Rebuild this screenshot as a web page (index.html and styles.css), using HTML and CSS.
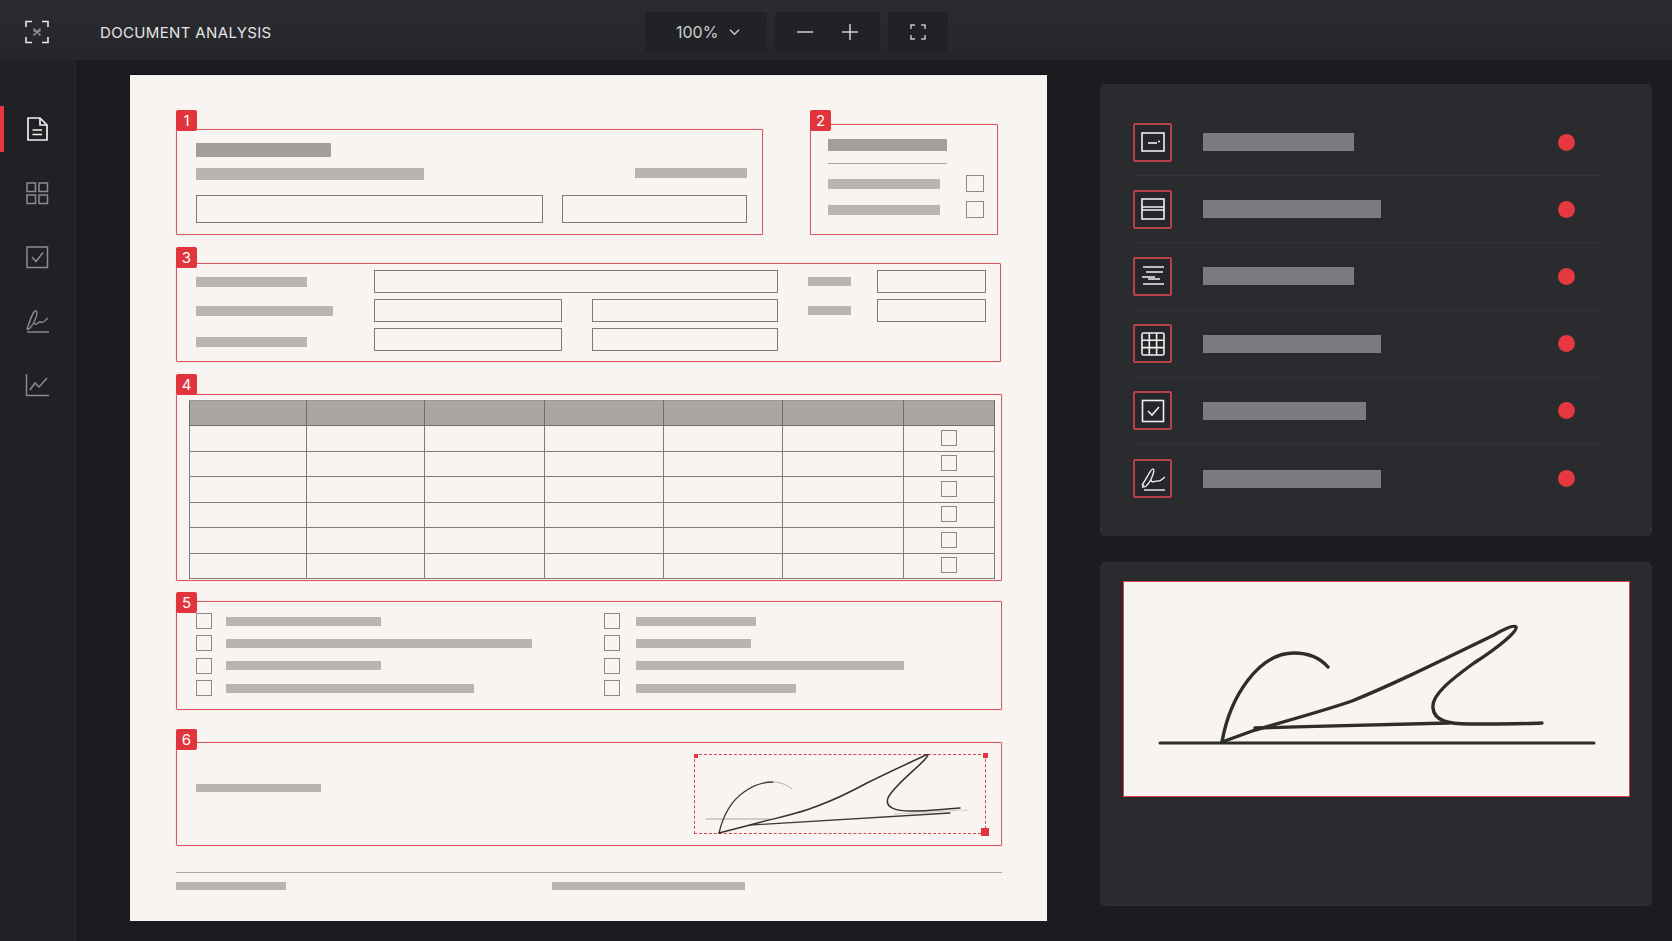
FILE: index.html
```html
<!DOCTYPE html>
<html lang="en">
<head>
  <meta charset="UTF-8">
  <meta name="viewport" content="width=device-width, initial-scale=1.0">
  <title>Document Analysis</title>
  <link rel="stylesheet" href="styles.css">
</head>
<body>
<!-- Top bar -->
<header class="topbar">
  <svg class="logo" viewBox="0 0 24 24" fill="none" stroke="#e6e6e6" stroke-width="1.600">
    <path d="M1 7V1.500H7M17 1.500H23V7M23 17V22.500H17M7 22.500H1V17"/>
    <path d="M8.500 8.500L15.500 15.500M15.500 8.500L8.500 15.500M8.500 11H15.500" stroke="#8d8e91" stroke-width="1.600"/>
  </svg>
  <div class="app-title">DOCUMENT ANALYSIS</div>
  <div class="controls">
    <div class="ctl ctl-zoom">
      <span>100%</span>
      <svg class="chev" viewBox="0 0 12 8" fill="none" stroke="#c8c8c9" stroke-width="1.500"><path d="M1 1.500L6 6.500L11 1.500"/></svg>
    </div>
    <div class="ctl ctl-steps">
      <svg class="step" viewBox="0 0 16 16" fill="none" stroke="#d0d0d1" stroke-width="1.500"><path d="M0 8H16"/></svg>
      <svg class="step" viewBox="0 0 16 16" fill="none" stroke="#d0d0d1" stroke-width="1.500"><path d="M0 8H16M8 0V16"/></svg>
    </div>
    <div class="ctl ctl-fit">
      <svg class="step" viewBox="0 0 16 16" fill="none" stroke="#c4c4c5" stroke-width="1.500"><path d="M1 5V1H5M11 1H15V5M15 11V15H11M5 15H1V11"/></svg>
    </div>
  </div>
</header>

<div class="workspace">
  <!-- Left rail -->
  <nav class="rail">
    <div class="rail-item active">
      <svg viewBox="0 0 24 24" fill="none" stroke="#f0f0f0" stroke-width="1.700" stroke-linejoin="round"><path d="M3 1H15L22 8V23H3Z"/><path d="M15 1V8H22"/><path d="M7.500 13H17M7.500 17.500H17"/></svg>
    </div>
    <div class="rail-item">
      <svg viewBox="0 0 24 24" fill="none" stroke="#8c8d90" stroke-width="1.500"><rect x="2" y="2" width="8.500" height="8.500"/><rect x="14" y="2" width="8.500" height="8.500"/><rect x="2" y="14" width="8.500" height="8.500"/><rect x="14" y="14" width="8.500" height="8.500"/></svg>
    </div>
    <div class="rail-item">
      <svg viewBox="0 0 24 24" fill="none" stroke="#8c8d90" stroke-width="1.500"><rect x="2" y="2" width="20.500" height="20.500"/><path d="M7 12L11 16.500L18 7.500"/></svg>
    </div>
    <div class="rail-item">
      <svg viewBox="0 0 24 24" fill="none" stroke="#8c8d90" stroke-width="1.400"><path d="M2 20C5 12 8 1 11 2C14 3 9 15 5 19C3 21 1 21 3 19"/><path d="M9 14C11 18 14 11 16 13C18 15 20 11 23 9"/><path d="M2 23H24"/></svg>
    </div>
    <div class="rail-item">
      <svg viewBox="0 0 24 24" fill="none" stroke="#8c8d90" stroke-width="1.500"><path d="M1.500 1V22.500H24"/><path d="M5 17L10 10L14 14L22 5"/></svg>
    </div>
  </nav>

  <main class="stage">
    <!-- Scanned form -->
    <section class="sheet">
      <div class="sheet-top">
        <div class="zone zone-1">
          <span class="badge">1</span>
          <div class="bar dark w135 h14"></div>
          <div class="line-1">
            <div class="bar w228 h12"></div>
            <div class="bar w112 h10 nudge-up"></div>
          </div>
          <div class="inputs-1">
            <div class="field w347"></div>
            <div class="field w185"></div>
          </div>
        </div>
        <div class="zone zone-2">
          <span class="badge">2</span>
          <div class="bar dark w119 h12"></div>
          <div class="rule"></div>
          <div class="line-2"><div class="bar w112 h10"></div><span class="box box-lg"></span></div>
          <div class="line-2"><div class="bar w112 h10"></div><span class="box box-lg"></span></div>
        </div>
      </div>

      <div class="zone zone-3">
        <span class="badge">3</span>
        <div class="bar w111 h10"></div>
        <div class="field span-3"></div>
        <div class="bar w43 h9 col-6"></div>
        <div class="field"></div>

        <div class="bar w137 h10"></div>
        <div class="field"></div>
        <div class="field col-4"></div>
        <div class="bar w43 h9 col-6"></div>
        <div class="field"></div>

        <div class="bar w111 h10 last-label"></div>
        <div class="field"></div>
        <div class="field col-4"></div>
      </div>

      <div class="zone zone-4">
        <span class="badge">4</span>
        <table class="grid-table">
          <colgroup>
            <col class="c1"><col class="c2"><col class="c3"><col class="c4"><col class="c5"><col class="c6"><col class="c7">
          </colgroup>
          <thead>
            <tr><th></th><th></th><th></th><th></th><th></th><th></th><th></th></tr>
          </thead>
          <tbody>
            <tr><td></td><td></td><td></td><td></td><td></td><td></td><td><span class="box"></span></td></tr>
            <tr><td></td><td></td><td></td><td></td><td></td><td></td><td><span class="box"></span></td></tr>
            <tr><td></td><td></td><td></td><td></td><td></td><td></td><td><span class="box"></span></td></tr>
            <tr><td></td><td></td><td></td><td></td><td></td><td></td><td><span class="box"></span></td></tr>
            <tr><td></td><td></td><td></td><td></td><td></td><td></td><td><span class="box"></span></td></tr>
            <tr><td></td><td></td><td></td><td></td><td></td><td></td><td><span class="box"></span></td></tr>
          </tbody>
        </table>
      </div>

      <div class="zone zone-5">
        <span class="badge">5</span>
        <div class="opt"><span class="box"></span><div class="bar w155 h9"></div></div>
        <div class="opt opt-r"><span class="box"></span><div class="bar w120 h9"></div></div>
        <div class="opt"><span class="box"></span><div class="bar w306 h9"></div></div>
        <div class="opt opt-r"><span class="box"></span><div class="bar w115 h9"></div></div>
        <div class="opt"><span class="box"></span><div class="bar w155 h9"></div></div>
        <div class="opt opt-r"><span class="box"></span><div class="bar w268 h9"></div></div>
        <div class="opt"><span class="box"></span><div class="bar w248 h9"></div></div>
        <div class="opt opt-r"><span class="box"></span><div class="bar w160 h9"></div></div>
      </div>

      <div class="zone zone-6">
        <span class="badge">6</span>
        <div class="bar w125 h8 sig-label"></div>
        <div class="sig-box">
          <span class="handle handle-tl"></span>
          <span class="handle handle-tr"></span>
          <span class="handle handle-br"></span>
          <svg class="sig-small" viewBox="0 0 292 80" fill="none" stroke-linecap="round">
            <path d="M12 65H76" stroke="#a9a7a5" stroke-width="1"/>
            <path d="M200 60L274 56" stroke="#cfcdcb" stroke-width="1"/>
            <path d="M25 79C29 62 37 47 50 38C60 31 70 28 79 28" stroke="#3a3938" stroke-width="1.300"/>
            <path d="M79 28C88 28 94 32 98 35" stroke="#b5b3b1" stroke-width="1"/>
            <path d="M25 79L56 71C85 63 105 60 126 51C145 44 160 36 173 29C195 18 215 9 234 0C236 5 200 30 194 44C190 55 205 57 216 57C235 57 250 55 266 54" stroke="#333231" stroke-width="1.500"/>
            <path d="M56 71L256 59" stroke="#3a3938" stroke-width="1.300"/>
          </svg>
        </div>
      </div>

      <div class="sheet-foot">
        <div class="bar w110 h8"></div>
        <div class="bar w193 h8"></div>
      </div>
    </section>

    <!-- Results -->
    <aside class="side">
      <div class="panel fields-panel">
        <div class="row">
          <span class="row-icon"><svg viewBox="0 0 24 24" fill="none" stroke="#f0f0f0" stroke-width="1.600"><rect x="1" y="3" width="22" height="18"/><path d="M7 13H16"/><path d="M17 11.500H19"/></svg></span>
          <div class="row-bar w151"></div><span class="dot"></span>
        </div>
        <div class="row">
          <span class="row-icon"><svg viewBox="0 0 24 24" fill="none" stroke="#f0f0f0" stroke-width="1.600"><rect x="1" y="2" width="22" height="20"/><path d="M1 10H23M1 13H23"/></svg></span>
          <div class="row-bar w178"></div><span class="dot"></span>
        </div>
        <div class="row">
          <span class="row-icon"><svg viewBox="0 0 24 24" fill="none" stroke="#f0f0f0" stroke-width="1.400"><path d="M2 3H23M5 8H22M1 13H14M7 15H19M2 20H23"/></svg></span>
          <div class="row-bar w151"></div><span class="dot"></span>
        </div>
        <div class="row">
          <span class="row-icon"><svg viewBox="0 0 24 24" fill="none" stroke="#f0f0f0" stroke-width="1.600"><rect x="1" y="1" width="22" height="22" rx="1.500"/><path d="M8.300 1V23M15.600 1V23M1 8.300H23M1 15.600H23"/></svg></span>
          <div class="row-bar w178"></div><span class="dot"></span>
        </div>
        <div class="row">
          <span class="row-icon"><svg viewBox="0 0 24 24" fill="none" stroke="#f0f0f0" stroke-width="1.600"><rect x="1.500" y="1.500" width="21" height="21"/><path d="M7 12L11 16L18 8"/></svg></span>
          <div class="row-bar w163"></div><span class="dot"></span>
        </div>
        <div class="row">
          <span class="row-icon"><svg viewBox="0 0 24 24" fill="none" stroke="#f0f0f0" stroke-width="1.400"><path d="M1 18C5 13 10 1 12 2C15 3 9 16 5 19C2 21 0 20 3 18"/><path d="M10 13C11 17 15 13 17 14C19 15 21 12 24 10"/><path d="M3 23H24"/></svg></span>
          <div class="row-bar w178"></div><span class="dot"></span>
        </div>
      </div>

      <div class="panel sig-panel">
        <div class="sig-card">
          <svg class="sig-large" viewBox="0 0 506 216" fill="none" stroke="#2e2d2c" stroke-linecap="round" stroke-linejoin="round">
            <path d="M36 162H470" stroke-width="3"/>
            <path d="M98 161C106 115 135 72 170 72C185 72 197 78 204 86" stroke-width="3.400"/>
            <path d="M98 161L131 149C170 138 205 128 228 120C265 105 300 88 370 54C382 47 390 44 392 46C394 50 375 66 350 82C328 98 307 114 309 127C310 140 325 143 345 143C370 143 400 143 418 142" stroke-width="3.400"/>
            <path d="M131 147C200 145 280 143 325 142" stroke-width="3.400"/>
          </svg>
        </div>
      </div>
    </aside>
  </main>
</div>
</body>
</html>
```

FILE: styles.css
```css
* {
  box-sizing: border-box;
}
body {
  margin: 0;
  height: 941px;
  overflow: hidden;
  background: #1b1c20;
  font-family: 'Inter', 'Liberation Sans', sans-serif;
  color: #e8e8e8;
  display: flex;
  flex-direction: column;
}

/* Top bar */
.topbar {
  height: 60px;
  flex: none;
  padding-top: 4px;
  display: flex;
  align-items: center;
  background: linear-gradient(#2b2c31, #25262a);
}
.logo {
  width: 24px;
  height: 24px;
  margin-left: 25px;
}
.app-title {
  margin-left: 51px;
  width: 545px;
  font-size: 15px;
  letter-spacing: 0.35px;
  color: #e4e4e4;
}
.controls {
  display: flex;
  height: 40px;
  gap: 8px;
}
.ctl {
  background: #212226;
  border-radius: 3px;
  display: flex;
  align-items: center;
}
.ctl-zoom {
  width: 122px;
  padding-left: 31px;
  font-size: 16px;
  color: #cfcfd0;
}
.chev {
  width: 11px;
  height: 8px;
  margin-left: 11px;
}
.ctl-steps {
  width: 105px;
  justify-content: center;
  gap: 29px;
}
.ctl-fit {
  width: 60px;
  justify-content: center;
}
.step {
  width: 16px;
  height: 16px;
}

/* Left rail */
.workspace {
  flex: 1;
  display: flex;
  min-height: 0;
}
.rail {
  width: 76px;
  flex: none;
  padding-top: 46px;
  background: #202125;
  border-right: 1px solid #26272b;
}
.rail-item {
  height: 64px;
  display: flex;
  align-items: center;
  padding-left: 25px;
}
.rail-item svg {
  width: 24px;
  height: 24px;
}
.rail-item.active {
  height: 46px;
  margin-bottom: 9px;
  border-left: 4px solid #e5383f;
  padding-left: 21px;
}

/* Sheet */
.stage {
  flex: 1;
  display: flex;
  align-items: flex-start;
}
.sheet {
  width: 917px;
  height: 846px;
  margin: 15px 0 0 54px;
  padding: 49px 0 0 46px;
  background: #f7f4f1;
  box-shadow: 0 -1px 0 #0f1012;
}
.sheet-top {
  display: flex;
  align-items: flex-end;
  gap: 47px;
}
.zone {
  position: relative;
  border: 1px solid #d95660;
  border-radius: 1px;
  box-shadow: 0 0 1px rgba(217, 70, 80, 0.6);
}
.badge {
  position: absolute;
  left: -1px;
  width: 21px;
  height: 21px;
  background: #e1343d;
  border-radius: 2px;
  color: #fff;
  font-size: 15px;
  line-height: 21px;
  text-align: center;
}
.bar {
  background: #b9b4b0;
}
.bar.dark {
  background: #a39e9a;
}
.field {
  height: 23px;
  border: 1px solid #7d7a78;
}
.box {
  display: inline-block;
  width: 16px;
  height: 16px;
  flex: none;
  border: 1px solid #8b8886;
  vertical-align: middle;
}
.box-lg {
  width: 18px;
  height: 17px;
}

/* Bar sizes */
.w43 { width: 43px; }
.w110 { width: 110px; }
.w111 { width: 111px; }
.w112 { width: 112px; }
.w115 { width: 115px; }
.w119 { width: 119px; }
.w120 { width: 120px; }
.w125 { width: 125px; }
.w135 { width: 135px; }
.w137 { width: 137px; }
.w155 { width: 155px; }
.w160 { width: 160px; }
.w185 { width: 185px; }
.w193 { width: 193px; }
.w228 { width: 228px; }
.w248 { width: 248px; }
.w268 { width: 268px; }
.w306 { width: 306px; }
.w347 { width: 347px; }
.h8 { height: 8px; }
.h9 { height: 9px; }
.h10 { height: 10px; }
.h12 { height: 12px; }
.h14 { height: 14px; }

/* Zones */
.zone-1 {
  width: 587px;
  height: 106px;
  padding: 13px 15px 0 19px;
}
.zone-1 .badge {
  top: -20px;
}
.line-1 {
  display: flex;
  justify-content: space-between;
  align-items: center;
  margin-top: 11px;
}
.nudge-up {
  margin-bottom: 2px;
}
.inputs-1 {
  display: flex;
  gap: 19px;
  margin-top: 15px;
}
.inputs-1 .field {
  height: 28px;
}
.zone-2 {
  width: 188px;
  height: 111px;
  padding: 14px 13px 0 17px;
}
.zone-2 .badge {
  top: -15px;
}
.rule {
  width: 119px;
  height: 1px;
  margin: 12px 0 11px;
  background: #a9a5a2;
}
.line-2 {
  display: flex;
  justify-content: space-between;
  align-items: center;
  margin-bottom: 9px;
}
.zone-3 {
  width: 825px;
  height: 99px;
  margin-top: 28px;
  padding: 6px 0 0 19px;
  display: grid;
  grid-template-columns: 178px 188px 30px 186px 30px 69px 109px;
  grid-auto-rows: 23px;
  row-gap: 6px;
  align-items: center;
}
.zone-3 .badge {
  top: -17px;
}
.last-label {
  margin-top: 4px;
}
.span-3 {
  grid-column: 2 / span 3;
}
.col-4 {
  grid-column: 4;
}
.col-6 {
  grid-column: 6;
}
.zone-4 {
  width: 826px;
  height: 187px;
  margin-top: 32px;
  padding: 5px 0 0 12px;
}
.zone-4 .badge {
  top: -21px;
}
.grid-table {
  width: 805px;
  height: 179px;
  table-layout: fixed;
  border-collapse: collapse;
}
.c1 { width: 117px; }
.c2 { width: 118px; }
.c3 { width: 120px; }
.c4 { width: 119px; }
.c5 { width: 119px; }
.c6 { width: 121px; }
.c7 { width: 91px; }
.grid-table th {
  height: 25px;
  padding: 0;
  background: #aca6a2;
  border: 1px solid #6f6c6a;
  border-top-color: #9a9591;
}
.grid-table td {
  padding: 0;
  border: 1px solid #7f7c7a;
  text-align: center;
}
.grid-table .box {
  margin-bottom: 3px;
}
.zone-5 {
  width: 826px;
  height: 109px;
  margin-top: 20px;
  padding: 8px 0 0 19px;
  display: grid;
  grid-template-columns: 408px 1fr;
  grid-auto-rows: 22.33px;
}
.zone-5 .badge {
  top: -10px;
}
.opt {
  display: flex;
  align-items: center;
  gap: 14px;
}
.opt-r {
  gap: 16px;
}
.zone-6 {
  width: 826px;
  height: 104px;
  margin-top: 32px;
  padding: 11px 15px 0 19px;
  display: flex;
  justify-content: space-between;
  align-items: flex-start;
}
.zone-6 .badge {
  top: -14px;
}
.sig-label {
  margin-top: 30px;
}
.sig-box {
  position: relative;
  width: 292px;
  height: 80px;
  border: 1px dashed #d6434d;
}
.sig-small {
  position: absolute;
  left: -1px;
  top: -1px;
  width: 292px;
  height: 80px;
}
.handle {
  position: absolute;
  background: #e1343d;
}
.handle-tl {
  left: -1px;
  top: -1px;
  width: 4px;
  height: 4px;
}
.handle-tr {
  right: -3px;
  top: -2px;
  width: 5px;
  height: 5px;
}
.handle-br {
  right: -4px;
  bottom: -3px;
  width: 8px;
  height: 8px;
}
.sheet-foot {
  width: 826px;
  margin-top: 26px;
  padding-top: 9px;
  border-top: 1px solid #a9a5a2;
  display: flex;
  gap: 266px;
}

/* Right column */
.side {
  width: 552px;
  margin: 24px 0 0 53px;
}
.panel {
  background: #2a2b2f;
  border: 1px solid #2e2f33;
  border-radius: 5px;
}
.fields-panel {
  height: 452px;
  padding: 24px 50px 0 32px;
}
.row {
  height: 67.2px;
  display: flex;
  align-items: center;
  border-bottom: 1px solid #323337;
}
.row:last-child {
  border-bottom: none;
}
.row-icon {
  width: 39px;
  height: 39px;
  flex: none;
  display: flex;
  align-items: center;
  justify-content: center;
  border: 2px solid #b8414a;
  border-radius: 2px;
  background: #26272a;
}
.row-icon svg {
  width: 24px;
  height: 24px;
}
.row-bar {
  height: 18px;
  margin-left: 31px;
  background: #7b7c80;
}
.w151 { width: 151px; }
.w163 { width: 163px; }
.w178 { width: 178px; }
.dot {
  width: 17px;
  height: 17px;
  margin-left: auto;
  margin-right: 26px;
  border-radius: 50%;
  background: #e5383f;
}
.sig-panel {
  height: 344px;
  margin-top: 26px;
  padding: 18px 0 0 22px;
}
.sig-card {
  width: 507px;
  height: 216px;
  background: #f7f4f1;
  border: 1px solid #d9434c;
}
.sig-large {
  display: block;
  margin: -1px 0 0 0;
  width: 506px;
  height: 216px;
}
```
